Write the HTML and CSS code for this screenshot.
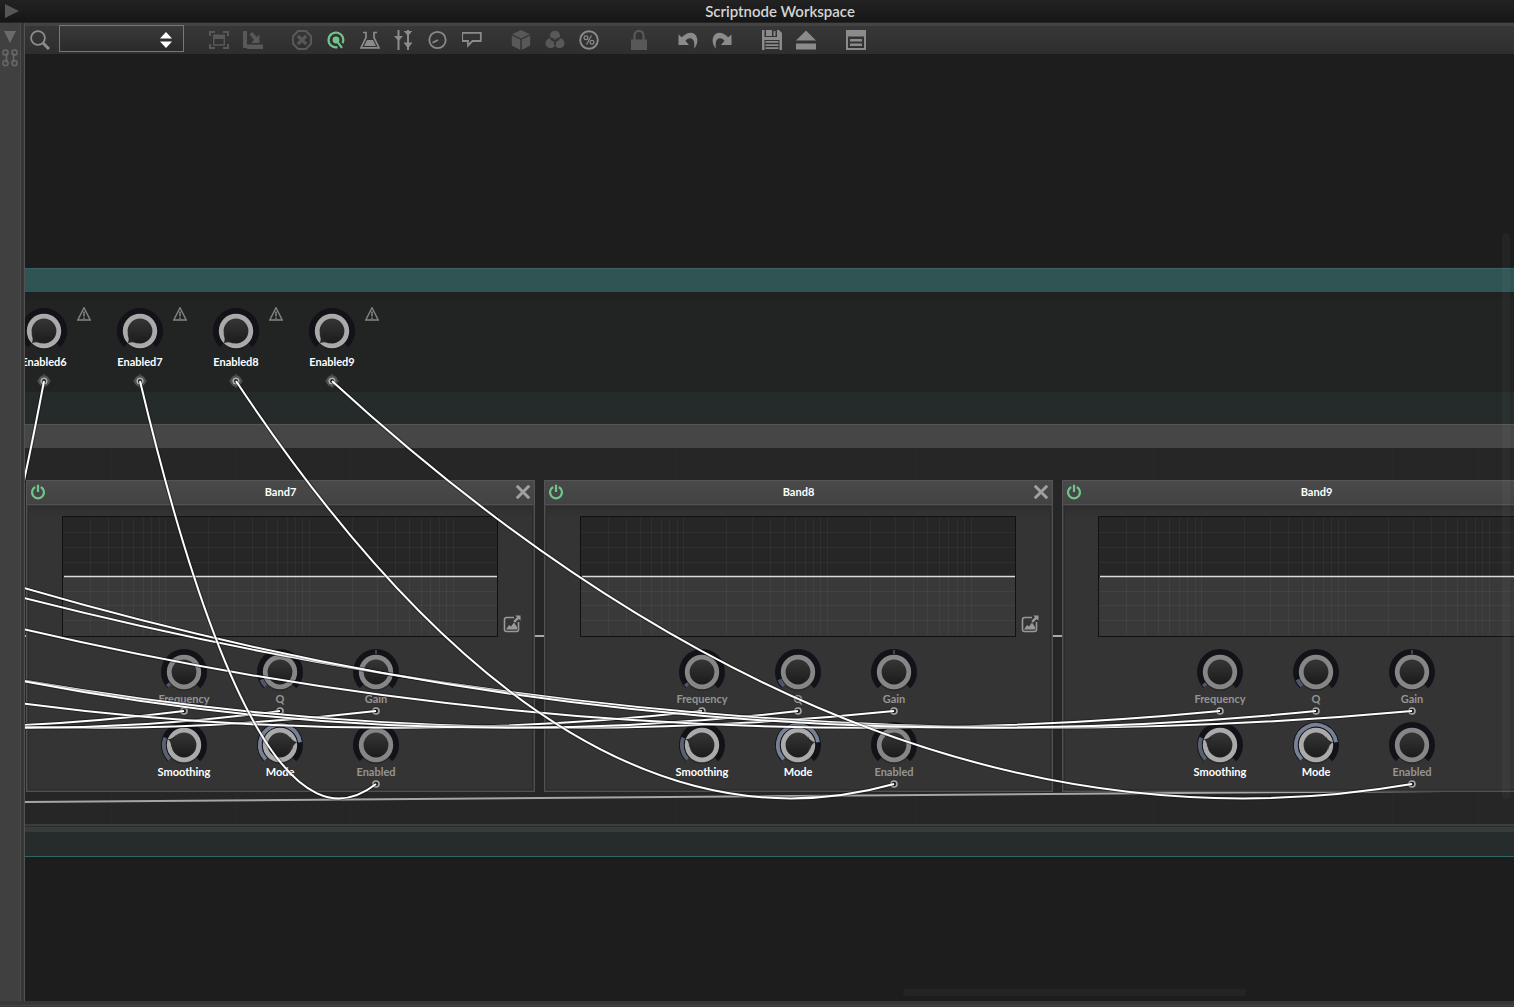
FILE: index.html
```html
<!DOCTYPE html>
<html lang="en">
<head>
<meta charset="utf-8">
<title>Scriptnode Workspace</title>
<link rel="stylesheet" href="styles.css">
</head>
<body>
<svg class="defs" aria-hidden="true">
  <defs>
    <linearGradient id="disc-fill" x1="0" y1="0" x2="0" y2="1">
      <stop offset="0" stop-color="#383838"/><stop offset="1" stop-color="#191919"/>
    </linearGradient>
    <symbol id="knob-base" viewBox="-24 -24 48 44" overflow="visible">
      <circle cx="0" cy="1" r="18" fill="#000" opacity=".2"/>
      <path d="M-14.1 14.1A20 20 0 1 1 14.1 14.1" fill="none" stroke="#121218" stroke-width="6"/>
      <circle r="14.8" fill="url(#disc-fill)" stroke="currentColor" stroke-width="4.8"/>
    </symbol>
    <symbol id="knob-off" viewBox="-24 -24 48 44" overflow="visible">
      <use href="#knob-base" x="-24" y="-24" width="48" height="44"/>
      <path transform="rotate(-135)" d="M0-17.2Q-1.5-13-7-11L7-11Q1.5-13 0-17.2Z" fill="#222424"/>
    </symbol>
    <symbol id="knob-frequency" viewBox="-24 -24 48 44" overflow="visible">
      <use href="#knob-base" x="-24" y="-24" width="48" height="44"/>
      <path d="M-14.1 14.1A20 20 0 0 1-16.4 11.5" fill="none" stroke="#50566a" stroke-width="4"/>
    </symbol>
    <symbol id="knob-q" viewBox="-24 -24 48 44" overflow="visible">
      <use href="#knob-base" x="-24" y="-24" width="48" height="44"/>
      <path d="M-14.1 14.1A20 20 0 0 1-18.5 7.5" fill="none" stroke="#50566a" stroke-width="4"/>
    </symbol>
    <symbol id="knob-gain" viewBox="-24 -24 48 44" overflow="visible">
      <use href="#knob-base" x="-24" y="-24" width="48" height="44"/>
      <path d="M0-22V-18" stroke="#50566a" stroke-width="1.5"/>
    </symbol>
    <symbol id="knob-smoothing" viewBox="-24 -24 48 44" overflow="visible">
      <use href="#knob-base" x="-24" y="-24" width="48" height="44"/>
      <path d="M-14.3 14.3A20.2 20.2 0 0 1-18.8-7.4" fill="none" stroke="#596072" stroke-width="3.8"/>
      <path transform="rotate(-70)" d="M0-17.2Q-1.5-13-7-11L7-11Q1.5-13 0-17.2Z" fill="#2b2b2b"/>
    </symbol>
    <symbol id="knob-mode" viewBox="-24 -24 48 44" overflow="visible">
      <use href="#knob-base" x="-24" y="-24" width="48" height="44"/>
      <path d="M-14.3 14.3A20.2 20.2 0 1 1 20-2.8" fill="none" stroke="#778094" stroke-width="3.8"/>
      <path transform="rotate(81)" d="M0-17.2Q-1.5-13-7-11L7-11Q1.5-13 0-17.2Z" fill="#2b2b2b"/>
    </symbol>
    <symbol id="port" viewBox="0 0 10 10">
      <circle cx="5" cy="5" r="3" fill="#222" stroke="#a8a8a8" stroke-width="1.6"/>
    </symbol>
    <symbol id="port-source" viewBox="0 0 14 14">
      <path d="M7 0V14M0 7H14" stroke="#555" stroke-width="1"/>
      <circle cx="7" cy="7" r="5" fill="#444" stroke="#555" stroke-width="1.4"/>
      <circle cx="7" cy="7" r="2.8" fill="#222" stroke="#b0b0b0" stroke-width="1.6"/>
    </symbol>
    <symbol id="warning" viewBox="0 0 14 14">
      <path d="M7 .8L13.200 13H.8Z" fill="none" stroke="#858585" stroke-width="1.4"/>
      <path d="M7 4.5V9.5M7 10.5V12" stroke="#858585" stroke-width="1.5"/>
    </symbol>
    <symbol id="power" viewBox="0 0 16 16">
      <path d="M5.2 3A6 6 0 1 0 10.8 3M8 .8V8" fill="none" stroke="#6fc58c" stroke-width="2.2"/>
    </symbol>
    <symbol id="close" viewBox="0 0 16 16">
      <path d="M1.800 1.800L14.200 14.200M14.200 1.800L1.800 14.200" stroke="#a0a0a0" stroke-width="3"/>
    </symbol>
    <symbol id="popup" viewBox="0 0 18 18">
      <path d="M11 2.5H3.5A2 2 0 0 0 1.500 4.500V14.500A2 2 0 0 0 3.500 16.500H13.500A2 2 0 0 0 15.500 14.500V7" fill="none" stroke="#999" stroke-width="1.6"/>
      <path d="M3 14.500L6 10L8 11.500L11 7.500L14 12V14.500Z" fill="#999"/>
      <path d="M12.200 .5H17.500V5.800L15.700 4L12 7.700L10.300 6L14 2.300Z" fill="#999"/>
    </symbol>
    <symbol id="grid" viewBox="0 0 436 121">
      <path fill="#393939" d="M1 61H435V120H1Z"/>
      <path d="M28.500 2V119M46.500 2V119M60.500 2V119M71.500 2V119M81.500 2V119M89.500 2V119M97.500 2V119M103.500 2V119M146.500 2V119M172.500 2V119M190.500 2V119M204.500 2V119M215.500 2V119M225.500 2V119M233.500 2V119M240.500 2V119M247.500 2V119M290.500 2V119M315.500 2V119M333.500 2V119M347.500 2V119M359.500 2V119M368.500 2V119M377.500 2V119M384.500 2V119M391.500 2V119M1 16.500H435M1 31.500H435M1 46.500H435M1 75.500H435M1 89.500H435M1 104.500H435" stroke="#fff" stroke-opacity=".045"/>
      <path d="M2 60.500H435" stroke="#fff" stroke-opacity=".2" stroke-width="3"/>
      <path d="M2 60.500H435" stroke="#dcdcdc"/>
      <path d="M.5 .5H435.500V120.500H.5Z" fill="none" stroke="#111"/>
    </symbol>
  </defs>
</svg>

<header class="titlebar">
  <button class="bare fold" aria-label="Fold workspace"><svg width="16" height="14"><path d="M1 0L15 7L1 14Z" fill="#565656"/></svg></button>
  <h1 class="title">Scriptnode Workspace</h1>
</header>

<div class="shell">
  <aside class="rail">
    <button class="bare" aria-label="Fold panel"><svg width="12" height="12"><path d="M0 0H12L6 12Z" fill="#6b6b6b"/></svg></button>
    <button class="bare" aria-label="Link panels"><svg width="16" height="18" fill="none" stroke="#686868" stroke-width="1.500"><circle cx="3.500" cy="3.500" r="2.600"/><circle cx="12.500" cy="3.500" r="2.600"/><circle cx="3.500" cy="14" r="2.600"/><circle cx="12.500" cy="14" r="2.600"/><path d="M4.500 4V13.500M11.500 4V13.500"/></svg></button>
  </aside>

  <main class="workspace">
    <nav class="toolbar">
      <label class="search" for="node-search"><svg width="20" height="20" fill="none" stroke="#8c8c8c"><circle cx="8" cy="8" r="6.900" stroke-width="1.800"/><path d="M13 13L19 19" stroke-width="3"/></svg></label>
      <span class="picker">
        <select id="node-search" aria-label="Search nodes"><option></option></select>
        <svg class="picker-arrows" width="12" height="16" fill="#fff"><path d="M0 6.500L6 0L12 6.500ZM0 9.500H12L6 16Z"/></svg>
      </span>
      <div class="group first">
        <button class="bare tool off" aria-label="Zoom to fit"><svg viewBox="0 0 20 20"><path d="M1 6V2H6M14 2H19V6M1 14V18H6M14 18H19V14" fill="none" stroke="currentColor" stroke-width="2"/><path d="M4 4.500H16V9H4Z" fill="currentColor"/><path d="M4.700 8V15H15.300V8" fill="none" stroke="currentColor" stroke-width="1.400"/></svg></button>
        <button class="bare tool off" aria-label="Fold unselected nodes"><svg viewBox="0 0 20 20" fill="currentColor"><path d="M0 1H4V18H0ZM4 14.500H20V19H4Z"/><path d="M6.500 4.500L9 2L14 7L16.500 4.500V13H8L11 10Z"/></svg></button>
      </div>
      <div class="group">
        <button class="bare tool off" aria-label="Deselect"><svg viewBox="0 0 20 20" fill="none" stroke="currentColor"><path d="M6.200 1H13.800L19 6.200V13.800L13.800 19H6.200L1 13.800V6.200Z" stroke-width="2.200"/><path d="M5.800 5.800L14.200 14.200M14.200 5.800L5.800 14.200" stroke-width="3.200"/></svg></button>
        <button class="bare tool on" aria-label="Show cables"><svg viewBox="0 0 20 20"><path d="M11.500 17.200A7.400 7.400 0 1 1 16.600 13.200M10 10L16 17.800" fill="none" stroke="currentColor" stroke-width="2.200"/><circle cx="10" cy="10" r="3.400" fill="currentColor"/></svg></button>
        <button class="bare tool" aria-label="Debug"><svg viewBox="0 0 20 20"><path d="M3 2.500H6V7.500L1 17.800H19L14 7.500V2.500H17" fill="none" stroke="currentColor" stroke-width="1.700"/><path d="M7 10H13L16 16H4Z" fill="currentColor"/></svg></button>
        <button class="bare tool" aria-label="Show parameters"><svg viewBox="0 0 20 20"><path d="M4.500 0V20M14 0V20" stroke="currentColor" stroke-width="2"/><path d="M0 6H9L4.500 11ZM9.800 1H18.200L14 6.200ZM9.500 12.500H18.500L14 18.500Z" fill="currentColor"/></svg></button>
        <button class="bare tool" aria-label="Edit knob"><svg viewBox="0 0 20 20" fill="none" stroke="currentColor" stroke-width="1.800"><circle cx="9.500" cy="10" r="8.200"/><path d="M10 10L4.500 12.800"/></svg></button>
        <button class="bare tool" aria-label="Comments"><svg viewBox="0 0 20 20" fill="none" stroke="currentColor" stroke-width="1.800"><path d="M.2 2.800H18.800V11H10.500L6 15.500V11H.2Z"/></svg></button>
      </div>
      <div class="group">
        <button class="bare tool off" aria-label="Wrap in container"><svg viewBox="0 0 20 20" fill="currentColor"><path d="M10 0L18.800 4.200L10 8.400L1.200 4.200ZM.8 5.500L9.300 9.500V20L.8 15.500ZM19.200 5.500L10.700 9.500V20L19.200 15.500Z"/></svg></button>
        <button class="bare tool off" aria-label="Colour nodes"><svg viewBox="0 0 20 20"><circle cx="10" cy="5.800" r="5" fill="currentColor"/><circle cx="5.500" cy="13.200" r="5" fill="currentColor"/><circle cx="14.500" cy="13.200" r="5" fill="currentColor"/><path d="M5.500 8.200A5 5 0 0 0 14.500 8.200M5.500 8.200A5 5 0 0 1 10 15.500M14.500 8.200A5 5 0 0 0 10 15.500" fill="none" stroke="#333" stroke-width="1.200"/></svg></button>
        <button class="bare tool" aria-label="CPU usage"><svg viewBox="0 0 20 20" fill="none" stroke="currentColor"><circle cx="10" cy="10" r="8.800" stroke-width="1.900"/><circle cx="7" cy="7.800" r="1.900" stroke-width="1.200"/><circle cx="13" cy="12.200" r="1.900" stroke-width="1.200"/><path d="M12.500 5.500L7.500 14.500" stroke-width="1.200"/></svg></button>
      </div>
      <div class="group far">
        <button class="bare tool off" aria-label="Lock"><svg viewBox="0 0 20 20"><path d="M5.500 10V5.500A4.500 4.500 0 0 1 14.500 5.500V10" fill="none" stroke="currentColor" stroke-width="2.200"/><path d="M2 9.500H18V20H2Z" fill="currentColor"/></svg></button>
      </div>
      <div class="group">
        <button class="bare tool" aria-label="Undo"><svg viewBox="0 0 20 20" fill="currentColor"><path id="undo-arrow" d="M.5 4.500L3.800 7.300C7.500 3.200 13 1.300 16.500 4C20.500 7.500 20.300 13.500 16 18.800C16.800 13.500 16.300 10.200 13.800 8.800C11.500 7.700 9 8.800 7.500 10.800L11 15H.5Z"/></svg></button>
        <button class="bare tool" aria-label="Redo"><svg viewBox="0 0 20 20" fill="currentColor"><use href="#undo-arrow" transform="translate(20)scale(-1 1)"/></svg></button>
      </div>
      <div class="group far">
        <button class="bare tool" aria-label="Save"><svg viewBox="0 0 20 20" fill="currentColor"><path d="M0 0H2.500V7.500H15V0H17L20 3V20H17.500V10H2.500V20H0ZM4 0H10V6H4ZM11.500 1V6H13.500V1Z"/><path d="M2 7H18V10H2ZM3.500 11H16.500V12.800H3.500ZM3.500 14.200H16.500V16H3.500ZM3.500 17.300H16.500V19H3.500Z"/></svg></button>
        <button class="bare tool" aria-label="Export"><svg viewBox="0 0 20 20" fill="currentColor"><path d="M0 10.500L10 .5L20 10.500ZM0 13.500H20V19.500H0Z"/></svg></button>
      </div>
      <div class="group far">
        <button class="bare tool" aria-label="Properties"><svg viewBox="0 0 20 20"><path d="M1 1H19V19H1Z" fill="none" stroke="currentColor" stroke-width="2"/><path d="M1 1H19V6.500H1ZM4 9H16V11.500H4ZM4 13.500H16V16H4Z" fill="currentColor"/></svg></button>
      </div>
    </nav>

    <section class="canvas">
      <article class="root">
        <div class="root-header"></div>
        <div class="root-params">
          <label class="param"><span class="dial"><svg><use href="#knob-off"/></svg><input type="range" min="0" max="1" value="0"></span><span class="name">Enabled6</span><svg class="port"><use href="#port-source"/></svg><svg class="warn"><use href="#warning"/></svg></label>
          <label class="param"><span class="dial"><svg><use href="#knob-off"/></svg><input type="range" min="0" max="1" value="0"></span><span class="name">Enabled7</span><svg class="port"><use href="#port-source"/></svg><svg class="warn"><use href="#warning"/></svg></label>
          <label class="param"><span class="dial"><svg><use href="#knob-off"/></svg><input type="range" min="0" max="1" value="0"></span><span class="name">Enabled8</span><svg class="port"><use href="#port-source"/></svg><svg class="warn"><use href="#warning"/></svg></label>
          <label class="param"><span class="dial"><svg><use href="#knob-off"/></svg><input type="range" min="0" max="1" value="0"></span><span class="name">Enabled9</span><svg class="port"><use href="#port-source"/></svg><svg class="warn"><use href="#warning"/></svg></label>
        </div>

        <div class="chain">
          <div class="chain-header"></div>
          <div class="chain-body">
            <svg class="signal" aria-hidden="true">
              <path d="M86.500 0V400M211.500 0V400M325.500 0V400M650.500 0V400M890.500 0V400M1128.500 0V400M1367.500 0V400M1453.500 0V400" stroke="#292929"/>
              <path d="M0 188H1500" stroke="#aaa" stroke-width="2"/>
              <path d="M0 354L1420 343" stroke="#a6a6a6" stroke-width="2"/>
            </svg>

            <section class="band">
              <header class="band-header"><button class="bare" aria-label="Bypass Band7"><svg><use href="#power"/></svg></button><h2>Band7</h2><button class="bare" aria-label="Remove Band7"><svg><use href="#close"/></svg></button></header>
              <div class="band-body">
                <div class="plot-row"><svg class="plot"><use href="#grid"/></svg><button class="bare popup" aria-label="Open Band7 display"><svg><use href="#popup"/></svg></button></div>
                <div class="params">
                  <label class="param linked"><span class="dial"><svg><use href="#knob-frequency"/></svg><input type="range" value="3"></span><span class="name">Frequency</span><svg class="port"><use href="#port"/></svg></label>
                  <label class="param linked"><span class="dial"><svg><use href="#knob-q"/></svg><input type="range" value="10"></span><span class="name">Q</span><svg class="port"><use href="#port"/></svg></label>
                  <label class="param linked"><span class="dial"><svg><use href="#knob-gain"/></svg><input type="range" value="50"></span><span class="name">Gain</span><svg class="port"><use href="#port"/></svg></label>
                  <label class="param"><span class="dial"><svg><use href="#knob-smoothing"/></svg><input type="range" value="24"></span><span class="name">Smoothing</span></label>
                  <label class="param"><span class="dial"><svg><use href="#knob-mode"/></svg><input type="range" value="80"></span><span class="name">Mode</span></label>
                  <label class="param linked"><span class="dial"><svg><use href="#knob-base"/></svg><input type="range" value="0"></span><span class="name">Enabled</span><svg class="port"><use href="#port"/></svg></label>
                </div>
              </div>
            </section>

            <section class="band">
              <header class="band-header"><button class="bare" aria-label="Bypass Band8"><svg><use href="#power"/></svg></button><h2>Band8</h2><button class="bare" aria-label="Remove Band8"><svg><use href="#close"/></svg></button></header>
              <div class="band-body">
                <div class="plot-row"><svg class="plot"><use href="#grid"/></svg><button class="bare popup" aria-label="Open Band8 display"><svg><use href="#popup"/></svg></button></div>
                <div class="params">
                  <label class="param linked"><span class="dial"><svg><use href="#knob-frequency"/></svg><input type="range" value="3"></span><span class="name">Frequency</span><svg class="port"><use href="#port"/></svg></label>
                  <label class="param linked"><span class="dial"><svg><use href="#knob-q"/></svg><input type="range" value="10"></span><span class="name">Q</span><svg class="port"><use href="#port"/></svg></label>
                  <label class="param linked"><span class="dial"><svg><use href="#knob-gain"/></svg><input type="range" value="50"></span><span class="name">Gain</span><svg class="port"><use href="#port"/></svg></label>
                  <label class="param"><span class="dial"><svg><use href="#knob-smoothing"/></svg><input type="range" value="24"></span><span class="name">Smoothing</span></label>
                  <label class="param"><span class="dial"><svg><use href="#knob-mode"/></svg><input type="range" value="80"></span><span class="name">Mode</span></label>
                  <label class="param linked"><span class="dial"><svg><use href="#knob-base"/></svg><input type="range" value="0"></span><span class="name">Enabled</span><svg class="port"><use href="#port"/></svg></label>
                </div>
              </div>
            </section>

            <section class="band">
              <header class="band-header"><button class="bare" aria-label="Bypass Band9"><svg><use href="#power"/></svg></button><h2>Band9</h2><button class="bare" aria-label="Remove Band9"><svg><use href="#close"/></svg></button></header>
              <div class="band-body">
                <div class="plot-row"><svg class="plot"><use href="#grid"/></svg><button class="bare popup" aria-label="Open Band9 display"><svg><use href="#popup"/></svg></button></div>
                <div class="params">
                  <label class="param linked"><span class="dial"><svg><use href="#knob-frequency"/></svg><input type="range" value="3"></span><span class="name">Frequency</span><svg class="port"><use href="#port"/></svg></label>
                  <label class="param linked"><span class="dial"><svg><use href="#knob-q"/></svg><input type="range" value="10"></span><span class="name">Q</span><svg class="port"><use href="#port"/></svg></label>
                  <label class="param linked"><span class="dial"><svg><use href="#knob-gain"/></svg><input type="range" value="50"></span><span class="name">Gain</span><svg class="port"><use href="#port"/></svg></label>
                  <label class="param"><span class="dial"><svg><use href="#knob-smoothing"/></svg><input type="range" value="24"></span><span class="name">Smoothing</span></label>
                  <label class="param"><span class="dial"><svg><use href="#knob-mode"/></svg><input type="range" value="80"></span><span class="name">Mode</span></label>
                  <label class="param linked"><span class="dial"><svg><use href="#knob-base"/></svg><input type="range" value="0"></span><span class="name">Enabled</span><svg class="port"><use href="#port"/></svg></label>
                </div>
              </div>
            </section>
          </div>
        </div>
        <div class="root-footer"></div>
      </article>

      <!-- Modulation cables: each runs from a source port to a band parameter -->
      <svg class="cables" aria-hidden="true">
        <defs>
          <path id="c-f7" d="M-1318 327Q-580 750 159 657"/>
          <path id="c-g7" d="M-1222 327Q-435 750 351 657"/>
          <path id="c-q7" d="M-1127 327Q-436 750 255 657"/>
          <path id="c-f8" d="M-1031 327Q-177 750 677 657"/>
          <path id="c-g8" d="M-935 327Q-33 750 869 657"/>
          <path id="c-q8" d="M-840 327Q-33 750 773 657"/>
          <path id="c-f9" d="M-744 327Q226 750 1195 657"/>
          <path id="c-g9" d="M-649 327Q369 750 1387 657"/>
          <path id="c-q9" d="M-553 327Q369 750 1291 657"/>
          <path id="c-e6" d="M19 327Q-74 822 -167 730"/>
          <path id="c-e7" d="M115 327Q233 822 351 730"/>
          <path id="c-e8" d="M211 327Q540 822 869 730"/>
          <path id="c-e9" d="M307 327Q847 822 1387 730"/>
        </defs>
        <g><use class="edge" href="#c-f7"/><use class="wire" href="#c-f7"/></g>
        <g><use class="edge" href="#c-g7"/><use class="wire" href="#c-g7"/></g>
        <g><use class="edge" href="#c-q7"/><use class="wire" href="#c-q7"/></g>
        <g><use class="edge" href="#c-f8"/><use class="wire" href="#c-f8"/></g>
        <g><use class="edge" href="#c-g8"/><use class="wire" href="#c-g8"/></g>
        <g><use class="edge" href="#c-q8"/><use class="wire" href="#c-q8"/></g>
        <g><use class="edge" href="#c-f9"/><use class="wire" href="#c-f9"/></g>
        <g><use class="edge" href="#c-g9"/><use class="wire" href="#c-g9"/></g>
        <g><use class="edge" href="#c-q9"/><use class="wire" href="#c-q9"/></g>
        <g><use class="edge" href="#c-e6"/><use class="wire" href="#c-e6"/></g>
        <g><use class="edge" href="#c-e7"/><use class="wire" href="#c-e7"/></g>
        <g><use class="edge" href="#c-e8"/><use class="wire" href="#c-e8"/></g>
        <g><use class="edge" href="#c-e9"/><use class="wire" href="#c-e9"/></g>
      </svg>
      <div class="thumb-y"></div>
      <div class="thumb-x"></div>
    </section>
  </main>
</div>
<footer class="statusbar"></footer>
</body>
</html>
```

FILE: styles.css
```css
* { box-sizing: border-box; }

body {
  margin: 0;
  height: 100vh;
  display: flex;
  flex-direction: column;
  overflow: hidden;
  background: #1d1d1d;
  color: #fff;
  font-family: Lato, "Open Sans", sans-serif;
  font-size: 11px;
  font-weight: 700;
}

h1, h2 { margin: 0; font-size: inherit; font-weight: inherit; }
svg { display: block; }
.defs { position: absolute; width: 0; height: 0; }

.bare {
  display: block;
  padding: 0;
  border: 0;
  background: none;
  color: inherit;
}

/* Title bar */
.titlebar {
  flex: none;
  height: 23px;
  display: flex;
  align-items: center;
  padding-left: 4px;
  background: linear-gradient(#222, #161616);
  border-bottom: 1px solid #242424;
}
.title {
  flex: 1;
  padding-left: 26px;
  text-align: center;
  font-size: 15px;
  font-weight: 600;
  line-height: 20px;
  color: #d4d4d4;
}

/* Left rail and workspace */
.shell { flex: 1; min-height: 0; display: flex; }
.rail {
  flex: none;
  width: 25px;
  display: flex;
  flex-direction: column;
  align-items: center;
  gap: 6px;
  padding: 8px 5px 0 0;
  background: linear-gradient(90deg, #404040 20px, #4a4a4a 20px 21px, #373737 21px 24px, #525252 24px);
}
.workspace { flex: 1; min-width: 0; display: flex; flex-direction: column; }

/* Toolbar */
.toolbar {
  flex: none;
  height: 31px;
  display: flex;
  align-items: center;
  padding: 3px 0 0 5px;
  background: linear-gradient(#434343 3px, #373737 3px, #2e2e2e);
}
.search { width: 29px; }
.picker { position: relative; width: 125px; height: 27px; margin-bottom: 3px; }
.picker select {
  appearance: none;
  width: 100%;
  height: 100%;
  border: 1px solid #777;
  border-radius: 0;
  background: linear-gradient(#3a3a3a, #2a2a2a);
  color: #fff;
  font: inherit;
}
.picker-arrows { position: absolute; right: 12px; top: 7px; pointer-events: none; }
.group { display: flex; gap: 14px; margin-left: 29px; color: #8b8b8b; }
.group.first { margin-left: 25px; }
.group.far { margin-left: 30px; }
.tool, .tool svg { width: 20px; height: 20px; }
.tool.off { color: #585858; }
.tool.on { color: #70c48c; }

/* Node canvas */
.canvas {
  position: relative;
  flex: 1;
  min-height: 0;
  padding-top: 214px;
  overflow: hidden;
  background: #1d1d1d;
}
.root-header { height: 24px; background: #305353; border-top: 1px solid #3b6363; }
.root-params {
  display: flex;
  height: 132px;
  padding-top: 15px;
  margin-left: -29px;
  background: linear-gradient(#1f2120, #222423 10px, #222423 100px, #252a2b 100px);
}
.root-footer {
  height: 33px;
  border-top: 2px solid #3c3c3c;
  border-bottom: 1px solid #356562;
  background: linear-gradient(#272c2c 1px, #363c3c 1px 6px, #262c2c 6px);
}

/* Parameter knobs */
.param {
  position: relative;
  width: 96px;
  display: flex;
  flex-direction: column;
  align-items: center;
  color: #fff;
}
.dial { position: relative; width: 48px; height: 44px; color: #aaa; }
.dial svg { width: 48px; height: 44px; overflow: visible; }
.dial input {
  position: absolute;
  inset: 0;
  width: 100%;
  height: 100%;
  margin: 0;
  opacity: 0;
}
.name { position: relative; line-height: 14px; }
.port { position: relative; width: 10px; height: 10px; }
.linked { color: #949494; }
.linked .dial { color: #868686; }
.root-params .name { margin-top: 4px; }
.root-params .port { width: 14px; height: 14px; margin-top: 5px; }
.warn { position: absolute; top: 0; right: 1px; width: 14px; height: 14px; }

/* Container node */
.chain-header { height: 24px; background: #464646; border-top: 1px solid #555; }
.chain-body {
  position: relative;
  display: flex;
  gap: 9px;
  padding: 32px 0 32px 1px;
  background: #262626;
}
.signal { position: absolute; inset: 0; width: 100%; height: 100%; }

/* Filter band nodes */
.band { position: relative; flex: none; width: 509px; }
.band-header {
  display: flex;
  align-items: center;
  justify-content: space-between;
  height: 24px;
  padding: 0 3px 1px;
  background: linear-gradient(#494949, #434343);
  border: solid #555;
  border-width: 1px 1px 0;
}
.band-header svg { width: 16px; height: 16px; }
.band-header h2 { line-height: 14px; }
.band-body {
  height: 288px;
  display: flex;
  flex-direction: column;
  gap: 11px;
  padding-top: 12px;
  background: linear-gradient(#2d2d2d, #343434 14px);
  box-shadow: inset 0 0 0 1px #505050, inset 0 0 0 2px #3a3a3a, inset 0 0 0 3px #2c2c2c;
}
.plot-row {
  display: grid;
  grid-template-columns: 36px 436px 36px;
  height: 121px;
}
.plot { grid-column: 2; width: 436px; height: 121px; background: #262626; }
.popup { align-self: end; margin: 0 0 4px 5px; width: 18px; }
.popup svg { width: 18px; height: 18px; }
.params {
  display: grid;
  grid-template-columns: repeat(3, 96px);
  justify-content: center;
  row-gap: 5px;
  padding-right: 1px;
}

/* Cables above the nodes */
.cables {
  position: absolute;
  inset: 0;
  width: 100%;
  height: 100%;
  fill: none;
  pointer-events: none;
}
.edge { stroke: #000; stroke-opacity: 0.35; stroke-width: 4px; }
.wire { stroke: #fff; stroke-width: 2px; }

/* Scroll thumbs */
.thumb-y, .thumb-x { position: absolute; border-radius: 4px; background: #ffffff08; }
.thumb-y { top: 179px; right: 4px; width: 8px; height: 566px; }
.thumb-x { bottom: 5px; left: 878px; width: 343px; height: 7px; }

.statusbar {
  flex: none;
  height: 6px;
  background: linear-gradient(#373737 4px, #474343 4px 5px, #383636 5px);
}
```
